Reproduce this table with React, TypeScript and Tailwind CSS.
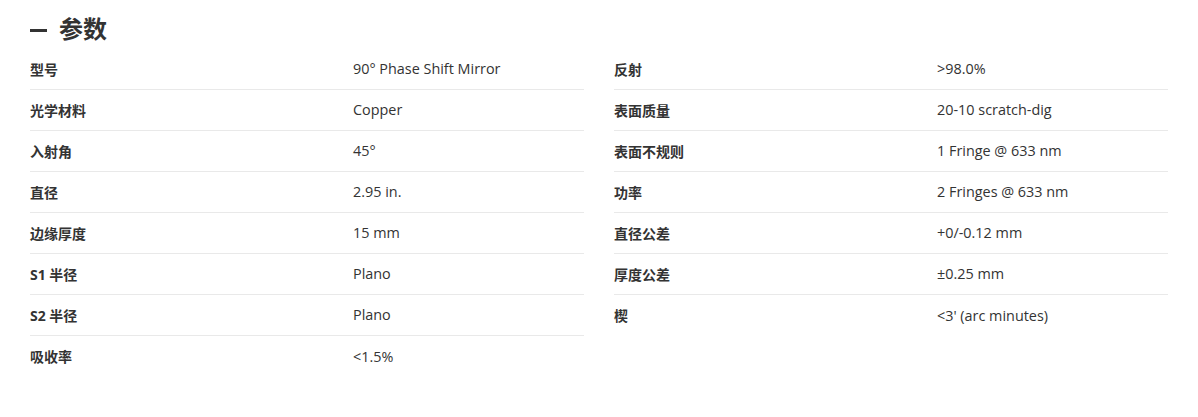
const left: [string, string][] = [
  ['型号', '90° Phase Shift Mirror'],
  ['光学材料', 'Copper'],
  ['入射角', '45°'],
  ['直径', '2.95 in.'],
  ['边缘厚度', '15 mm'],
  ['S1 半径', 'Plano'],
  ['S2 半径', 'Plano'],
  ['吸收率', '<1.5%'],
];

const right: [string, string][] = [
  ['反射', '>98.0%'],
  ['表面质量', '20-10 scratch-dig'],
  ['表面不规则', '1 Fringe @ 633 nm'],
  ['功率', '2 Fringes @ 633 nm'],
  ['直径公差', '+0/-0.12 mm'],
  ['厚度公差', '±0.25 mm'],
  ['楔', "<3' (arc minutes)"],
];

function SpecColumn({ rows }: { rows: [string, string][] }) {
  return (
    <div className="flex flex-col">
      {rows.map(([k, v], i) => (
        <div
          key={k}
          className={`flex items-center h-[41px] ${i < rows.length - 1 ? 'border-b border-[#e9e9e9]' : ''}`}
        >
          <div className="w-[323px] shrink-0 text-[14px] font-bold text-[#333]">{k}</div>
          <div className="text-[14.4px] text-[#333]">{v}</div>
        </div>
      ))}
    </div>
  );
}

export default function App() {
  return (
    <div
      className="w-[1198px] h-[417px] bg-white px-[30px] pt-[10px]"
      style={{ fontFamily: '"Open Sans", "Noto Sans CJK SC", sans-serif' }}
    >
      <h2 className="text-[24px] font-bold text-[#333] leading-[38px] flex items-center">
        <span className="w-[17px] h-[3px] bg-[#333] mr-[12px] mt-[3px]" />
        <span>参数</span>
      </h2>
      <div className="grid grid-cols-2 gap-x-[30px] mt-[1px]">
        <SpecColumn rows={left} />
        <SpecColumn rows={right} />
      </div>
    </div>
  );
}
